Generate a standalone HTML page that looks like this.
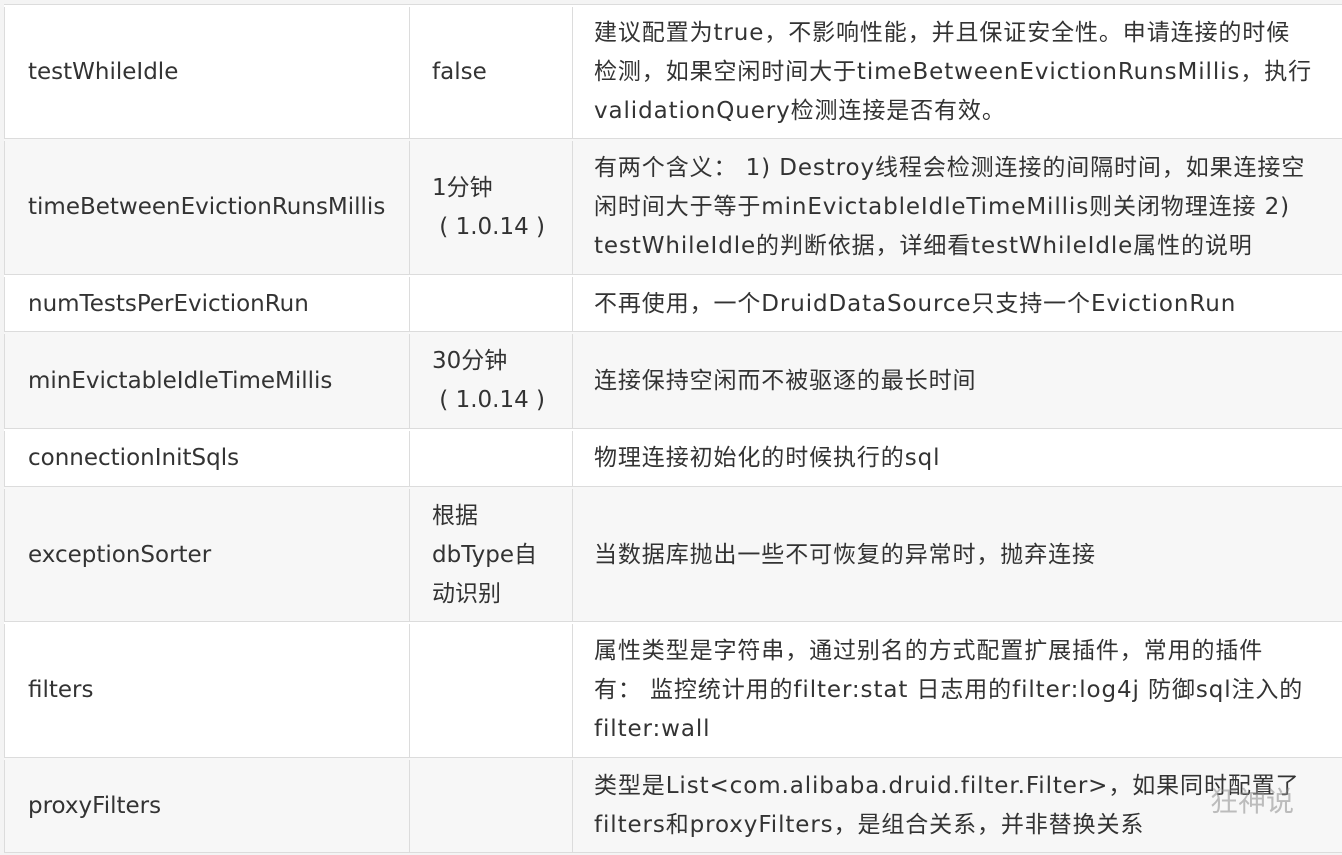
<!DOCTYPE html>
<html><head><meta charset="utf-8"><style>
body{margin:0;width:1342px;height:855px;overflow:hidden;background:#f4f4f4;font-family:"DejaVu Sans","Noto Sans CJK SC",sans-serif;color:#333;}
.r{position:absolute;left:4px;width:1350px;border-top:1px solid #dcdcdc;box-sizing:border-box;}
.c{position:absolute;top:2px;bottom:0;display:flex;align-items:center;font-size:23px;line-height:39px;box-sizing:border-box;white-space:nowrap;}
.c1{left:0;width:405px;padding-left:23px;border-left:1px solid #dcdcdc;}
.c2{left:405px;width:163px;padding-left:22px;border-left:1px solid #dcdcdc;}
.c3{left:568px;width:780px;padding-left:21px;border-left:1px solid #dcdcdc;letter-spacing:0.9px;}
.w{background:#fff}.g{background:#f7f7f7}
</style></head><body>
<div class="r w" style="top:4px;height:134px"><div class="c c1">testWhileIdle</div><div class="c c2">false</div><div class="c c3">建议配置为true，不影响性能，并且保证安全性。申请连接的时候<br>检测，如果空闲时间大于timeBetweenEvictionRunsMillis，执行<br>validationQuery检测连接是否有效。</div></div>
<div class="r g" style="top:138px;height:136px"><div class="c c1">timeBetweenEvictionRunsMillis</div><div class="c c2">1分钟<br>&nbsp;( 1.0.14 )</div><div class="c c3">有两个含义： 1) Destroy线程会检测连接的间隔时间，如果连接空<br>闲时间大于等于minEvictableIdleTimeMillis则关闭物理连接 2)<br>testWhileIdle的判断依据，详细看testWhileIdle属性的说明</div></div>
<div class="r w" style="top:274px;height:57px"><div class="c c1">numTestsPerEvictionRun</div><div class="c c2"></div><div class="c c3">不再使用，一个DruidDataSource只支持一个EvictionRun</div></div>
<div class="r g" style="top:331px;height:97px"><div class="c c1">minEvictableIdleTimeMillis</div><div class="c c2">30分钟<br>&nbsp;( 1.0.14 )</div><div class="c c3">连接保持空闲而不被驱逐的最长时间</div></div>
<div class="r w" style="top:428px;height:58px"><div class="c c1">connectionInitSqls</div><div class="c c2"></div><div class="c c3">物理连接初始化的时候执行的sql</div></div>
<div class="r g" style="top:486px;height:135px"><div class="c c1">exceptionSorter</div><div class="c c2">根据<br>dbType自<br>动识别</div><div class="c c3">当数据库抛出一些不可恢复的异常时，抛弃连接</div></div>
<div class="r w" style="top:621px;height:136px"><div class="c c1">filters</div><div class="c c2"></div><div class="c c3">属性类型是字符串，通过别名的方式配置扩展插件，常用的插件<br>有： 监控统计用的filter:stat 日志用的filter:log4j 防御sql注入的<br>filter:wall</div></div>
<div class="r g" style="top:757px;height:96px;border-bottom:1px solid #dcdcdc"><div class="c c1">proxyFilters</div><div class="c c2"></div><div class="c c3">类型是List&lt;com.alibaba.druid.filter.Filter&gt;，如果同时配置了<br>filters和proxyFilters，是组合关系，并非替换关系</div></div>
<div style="position:absolute;left:1210px;top:780px;font-size:28px;color:rgba(140,140,140,0.55)">狂神说</div>
</body></html>
